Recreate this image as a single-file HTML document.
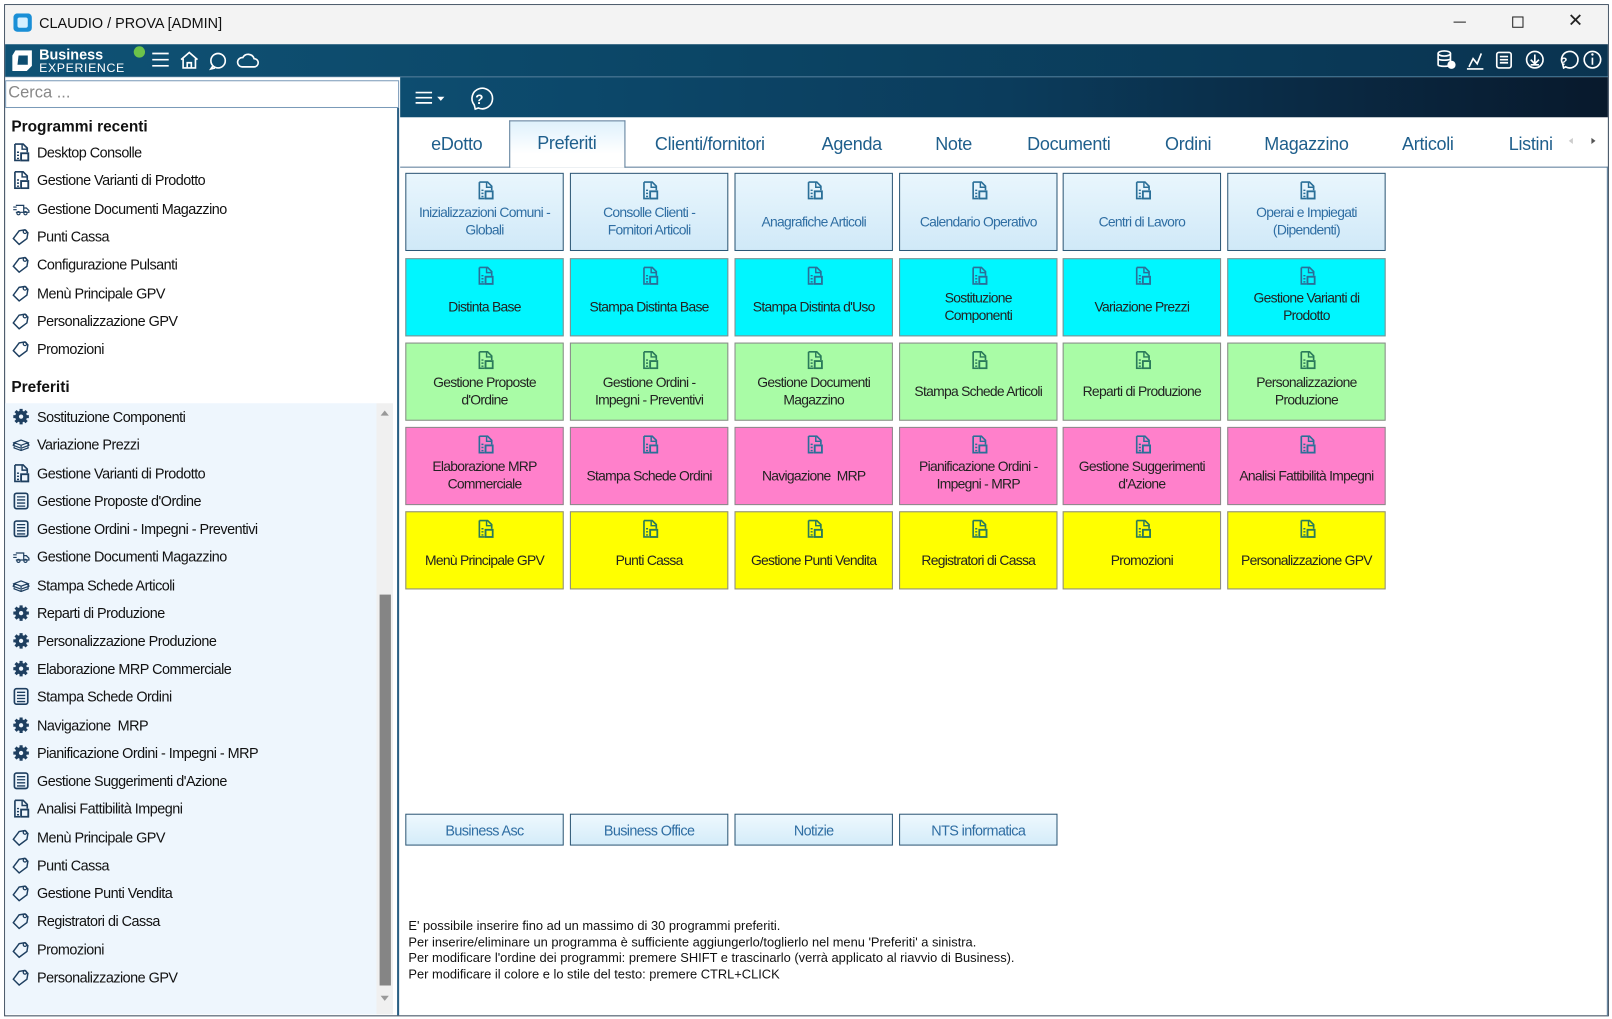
<!DOCTYPE html>
<html><head><meta charset="utf-8"><style>
*{margin:0;padding:0;box-sizing:border-box}
html,body{width:1612px;height:1019px;overflow:hidden;background:#fff;font-family:"Liberation Sans",sans-serif}
.root{position:absolute;left:0;top:0;width:1567px;height:991px;transform:scale(1.0287);transform-origin:0 0;background:#fff}
.abs{position:absolute}
.win{left:4px;top:4px;width:1560px;height:984px;border:1px solid #3a4a5c}
.title{left:5px;top:5px;width:1558px;height:38px;background:#f3f3f3}
.hdr{left:5px;top:43px;width:1558px;height:32px;background:linear-gradient(90deg,#0f5275 0%,#0b4565 45%,#0a3350 100%);border-bottom:1px solid #2a5f80}
.tb{left:389px;top:75px;width:1174px;height:39px;background:linear-gradient(90deg,#0d4d70 0%,#0b3c5c 50%,#0a2a44 75%,#08192c 100%)}
.search{left:5px;top:78px;width:383px;height:27px;border:1px solid #7a9ab8;background:#fff;color:#888;font-size:16px;padding:3px 0 0 2px}
.lp{left:5px;top:105px;width:383px;height:882px;border-right:2px solid #2a5f84}
.h{font-weight:bold;font-size:15px;color:#111;left:11px}
.it{left:12px;font-size:14px;color:#111;letter-spacing:-0.5px;white-space:nowrap;height:20px;line-height:20px}
.it svg{position:absolute;left:0;top:1px;width:17px;height:18px;color:#1e3f60}
.it span{position:absolute;left:24px;top:0}
.pref{left:5px;top:392px;width:361px;height:594px;background:#eef6fd}
.sb{left:366px;top:392px;width:16px;height:594px;background:#f0f0f0}
.tabs{left:389px;top:114px;width:1174px;height:49px;border-bottom:1px solid #5b7c99}
.tab{top:130px;font-size:17.5px;color:#1f5f8c;transform:translateX(-50%);white-space:nowrap;letter-spacing:-0.3px}
.tile{width:154px;height:76px;border:1px solid #8a8a8a;display:flex;align-items:center;justify-content:center;text-align:center;font-size:13.5px;color:#222;letter-spacing:-0.7px;line-height:17px;padding:18px 3px 0}
.tile svg{position:absolute;left:69px;top:7px;width:16px;height:18px;color:#2a6f98}
.b1{background:linear-gradient(#e9f6fd,#d0e9f8);border-color:#2b5675;color:#2f6ea3}
.b2{background:#00f6ff}.b3{background:#a9fca6}.b4{background:#ff80cb}.b5{background:#ffff00}
.b5 svg,.b3 svg{color:#2a7a5a}
.btn{top:791px;width:154px;height:31px;background:linear-gradient(#eef8fe,#d4ecf9);border:1px solid #2b5675;color:#2f6ea3;font-size:14px;letter-spacing:-0.6px;text-align:center;line-height:30px}
.help{left:397px;top:893px;font-size:12.5px;color:#111;line-height:15.7px;letter-spacing:0}
.ic{stroke:#fff;fill:none;stroke-width:1.6}
</style></head><body><div class="root">
<svg width="0" height="0" style="position:absolute">
<defs>
<symbol id="doc" viewBox="0 0 16 18"><path d="M2 1h8l4 4v4M2 1v16h5" fill="none" stroke="currentColor" stroke-width="1.6"/><path d="M9 1v5h5" fill="none" stroke="currentColor" stroke-width="1.4"/><rect x="8" y="10" width="7" height="7" fill="none" stroke="currentColor" stroke-width="1.8"/><path d="M4 9h2M4 12h2M4 15h2" stroke="currentColor" stroke-width="1.4"/></symbol>
<symbol id="tag" viewBox="0 0 18 18"><path d="M13 2l3 3-1 6-8 6-6-6 6-8z" fill="none" stroke="currentColor" stroke-width="1.5"/><circle cx="13" cy="4" r="1.8" fill="none" stroke="currentColor" stroke-width="1.3"/></symbol>
<symbol id="gear" viewBox="0 0 18 18"><circle cx="9" cy="9" r="6" fill="currentColor"/><path d="M9 1v16M1 9h16M3.3 3.3l11.4 11.4M14.7 3.3L3.3 14.7" stroke="currentColor" stroke-width="3.2"/><circle cx="9" cy="9" r="2.2" fill="#eef6fd"/></symbol>
<symbol id="list" viewBox="0 0 16 18"><rect x="1.5" y="1.5" width="13" height="15" rx="2" fill="none" stroke="currentColor" stroke-width="1.6"/><path d="M4 5h8M4 8h8M4 11h8M4 14h8" stroke="currentColor" stroke-width="1.3"/></symbol>
<symbol id="truck" viewBox="0 0 20 18"><path d="M4 5h9v8H4M13 8h3l3 3v2h-6" fill="none" stroke="currentColor" stroke-width="1.4"/><circle cx="7" cy="14" r="1.8" fill="none" stroke="currentColor" stroke-width="1.3"/><circle cx="15" cy="14" r="1.8" fill="none" stroke="currentColor" stroke-width="1.3"/><path d="M1 7h4M1 10h4" stroke="currentColor" stroke-width="1.3"/></symbol>
<symbol id="box" viewBox="0 0 20 18"><path d="M10 4l8 3-8 3-8-3z M2 7v6l8 3 8-3V7M10 10v6M2 7l-1 3 8 3M18 7l1 3-8 3" fill="none" stroke="currentColor" stroke-width="1.4"/></symbol>
</defs></svg>

<div class="abs win"></div>
<div class="abs title"></div>
<svg class="abs" style="left:13px;top:13px" width="18" height="18"><rect x="0" y="0" width="18" height="18" rx="4" fill="#1a8fd6"/><rect x="4" y="4" width="10" height="10" rx="2" fill="#d6f0ff"/></svg>
<div class="abs" style="left:38px;top:14px;font-size:14px;color:#111">CLAUDIO / PROVA [ADMIN]</div>
<div class="abs" style="left:1413px;top:21px;width:12px;height:1px;background:#222"></div>
<div class="abs" style="left:1470px;top:16px;width:11px;height:11px;border:1px solid #222"></div>
<div class="abs" style="left:1524px;top:10px;font-size:18px;color:#222">✕</div>

<div class="abs hdr"></div>
<svg class="abs" style="left:9px;top:47px" width="25" height="24"><path d="M6 2h16v15l-5 5H3V7z" fill="#fff"/><path d="M9 7h9v9H8z" fill="#0e4d70"/></svg>
<div class="abs" style="left:38px;top:45px;font-size:14px;font-weight:bold;color:#fff">Business</div>
<div class="abs" style="left:38px;top:59px;font-size:12px;color:#fff;letter-spacing:0.6px">EXPERIENCE</div>
<div class="abs" style="left:130px;top:45px;width:11px;height:11px;border-radius:50%;background:#6cc24a"></div>
<svg class="abs" style="left:146px;top:49px" width="110" height="20">
<path d="M2 3h16M2 9h16M2 15h16" class="ic"/>
<path d="M30 9l8-7 8 7M32 8v9h12V8M36 17v-5h4v5" class="ic"/>
<circle cx="66" cy="10" r="7" class="ic"/><path d="M61 15l-2 3 4-1" class="ic"/>
<path d="M89 16h12a4 4 0 0 0 0-8 6 6 0 0 0-11-1 4.5 4.5 0 0 0-1 9z" class="ic"/>
</svg>
<svg class="abs" style="left:1396px;top:48px" width="165" height="22">
<ellipse cx="8" cy="4" rx="6" ry="2.5" class="ic"/><path d="M2 4v11c0 2 12 2 12 0V4M2 9c0 2 12 2 12 0" class="ic"/><circle cx="15" cy="15" r="4" fill="#fff"/>
<path d="M32 17l4-8 4 5 4-10M30 19h16" class="ic"/>
<rect x="59" y="3" width="14" height="15" rx="2" class="ic"/><path d="M62 7h8M62 10h8M62 13h8" class="ic"/>
<circle cx="96" cy="10" r="8" class="ic"/><path d="M96 5v8M92 10l4 4 4-4M92 15h8" class="ic"/>
<path d="M124 18l-1-4a8 8 0 1 1 3 3z" class="ic"/><text x="121" y="15" font-size="11" fill="#fff" font-family="Liberation Sans" font-weight="bold">?</text>
<circle cx="152" cy="10" r="8" class="ic"/><path d="M152 8v7" class="ic" stroke-width="2"/><circle cx="152" cy="5" r="1.2" fill="#fff"/>
</svg>

<div class="abs search">Cerca ...</div>
<div class="abs lp"></div>
<div class="abs h" style="top:115px">Programmi recenti</div>
<div class="abs pref"></div>
<div class="abs sb"><div class="abs" style="left:3px;top:186px;width:11px;height:380px;background:#858585"></div>
<div class="abs" style="left:4px;top:7px;width:0;height:0;border-left:4px solid transparent;border-right:4px solid transparent;border-bottom:5px solid #999"></div>
<div class="abs" style="left:4px;top:576px;width:0;height:0;border-left:4px solid transparent;border-right:4px solid transparent;border-top:5px solid #999"></div></div>
<div class="abs h" style="top:368px">Preferiti</div>

<div>
<div class="abs it" style="top:138px"><svg><use href="#doc"/></svg><span>Desktop Consolle</span></div>
<div class="abs it" style="top:165px"><svg><use href="#doc"/></svg><span>Gestione Varianti di Prodotto</span></div>
<div class="abs it" style="top:193px"><svg><use href="#truck"/></svg><span>Gestione Documenti Magazzino</span></div>
<div class="abs it" style="top:220px"><svg><use href="#tag"/></svg><span>Punti Cassa</span></div>
<div class="abs it" style="top:247px"><svg><use href="#tag"/></svg><span>Configurazione Pulsanti</span></div>
<div class="abs it" style="top:275px"><svg><use href="#tag"/></svg><span>Menù Principale GPV</span></div>
<div class="abs it" style="top:302px"><svg><use href="#tag"/></svg><span>Personalizzazione GPV</span></div>
<div class="abs it" style="top:329px"><svg><use href="#tag"/></svg><span>Promozioni</span></div>

<div class="abs it" style="top:395px"><svg><use href="#gear"/></svg><span>Sostituzione Componenti</span></div>
<div class="abs it" style="top:422px"><svg><use href="#box"/></svg><span>Variazione Prezzi</span></div>
<div class="abs it" style="top:450px"><svg><use href="#doc"/></svg><span>Gestione Varianti di Prodotto</span></div>
<div class="abs it" style="top:477px"><svg><use href="#list"/></svg><span>Gestione Proposte d'Ordine</span></div>
<div class="abs it" style="top:504px"><svg><use href="#list"/></svg><span>Gestione Ordini - Impegni - Preventivi</span></div>
<div class="abs it" style="top:531px"><svg><use href="#truck"/></svg><span>Gestione Documenti Magazzino</span></div>
<div class="abs it" style="top:559px"><svg><use href="#box"/></svg><span>Stampa Schede Articoli</span></div>
<div class="abs it" style="top:586px"><svg><use href="#gear"/></svg><span>Reparti di Produzione</span></div>
<div class="abs it" style="top:613px"><svg><use href="#gear"/></svg><span>Personalizzazione Produzione</span></div>
<div class="abs it" style="top:640px"><svg><use href="#gear"/></svg><span>Elaborazione MRP Commerciale</span></div>
<div class="abs it" style="top:667px"><svg><use href="#list"/></svg><span>Stampa Schede Ordini</span></div>
<div class="abs it" style="top:695px"><svg><use href="#gear"/></svg><span>Navigazione &nbsp;MRP</span></div>
<div class="abs it" style="top:722px"><svg><use href="#gear"/></svg><span>Pianificazione Ordini - Impegni - MRP</span></div>
<div class="abs it" style="top:749px"><svg><use href="#list"/></svg><span>Gestione Suggerimenti d'Azione</span></div>
<div class="abs it" style="top:776px"><svg><use href="#doc"/></svg><span>Analisi Fattibilità Impegni</span></div>
<div class="abs it" style="top:804px"><svg><use href="#tag"/></svg><span>Menù Principale GPV</span></div>
<div class="abs it" style="top:831px"><svg><use href="#tag"/></svg><span>Punti Cassa</span></div>
<div class="abs it" style="top:858px"><svg><use href="#tag"/></svg><span>Gestione Punti Vendita</span></div>
<div class="abs it" style="top:885px"><svg><use href="#tag"/></svg><span>Registratori di Cassa</span></div>
<div class="abs it" style="top:913px"><svg><use href="#tag"/></svg><span>Promozioni</span></div>
<div class="abs it" style="top:940px"><svg><use href="#tag"/></svg><span>Personalizzazione GPV</span></div>
</div>

<div class="abs tb"></div>
<svg class="abs" style="left:400px;top:83px" width="90" height="26">
<path d="M4 7h16M4 12h16M4 17h16" class="ic" stroke-width="1.8"/><path d="M25 11h7l-3.5 4z" fill="#fff"/>
<path d="M62 23l-1-4a10 10 0 1 1 4 3z" class="ic" stroke-width="1.8"/><text x="62" y="18" font-size="13" fill="#fff" font-family="Liberation Sans" font-weight="bold">?</text>
</svg>

<div class="abs tabs"></div>
<div class="abs" style="left:495px;top:117px;width:113px;height:46px;border:1px solid #5b7c99;border-bottom:none;background:linear-gradient(#dff1fc,#fff 70%)"></div>
<div class="abs tab" style="left:444px">eDotto</div>
<div class="abs tab" style="left:551px;top:129px">Preferiti</div>
<div class="abs tab" style="left:690px">Clienti/fornitori</div>
<div class="abs tab" style="left:828px">Agenda</div>
<div class="abs tab" style="left:927px">Note</div>
<div class="abs tab" style="left:1039px">Documenti</div>
<div class="abs tab" style="left:1155px">Ordini</div>
<div class="abs tab" style="left:1270px">Magazzino</div>
<div class="abs tab" style="left:1388px">Articoli</div>
<div class="abs tab" style="left:1488px">Listini</div>
<div class="abs" style="left:1525px;top:134px;border-top:3px solid transparent;border-bottom:3px solid transparent;border-right:4px solid #ccc"></div>
<div class="abs" style="left:1547px;top:134px;border-top:3px solid transparent;border-bottom:3px solid transparent;border-left:4px solid #555"></div>
<div class="abs" style="left:1562px;top:162px;width:1px;height:826px;background:#5b7c99"></div>

<div>
<div class="abs tile b1" style="left:394px;top:168px"><svg><use href="#doc"/></svg>Inizializzazioni Comuni -<br>Globali</div>
<div class="abs tile b1" style="left:554px;top:168px"><svg><use href="#doc"/></svg>Consolle Clienti -<br>Fornitori Articoli</div>
<div class="abs tile b1" style="left:714px;top:168px"><svg><use href="#doc"/></svg>Anagrafiche Articoli</div>
<div class="abs tile b1" style="left:874px;top:168px"><svg><use href="#doc"/></svg>Calendario Operativo</div>
<div class="abs tile b1" style="left:1033px;top:168px"><svg><use href="#doc"/></svg>Centri di Lavoro</div>
<div class="abs tile b1" style="left:1193px;top:168px"><svg><use href="#doc"/></svg>Operai e Impiegati (Dipendenti)</div>

<div class="abs tile b2" style="left:394px;top:251px"><svg><use href="#doc"/></svg>Distinta Base</div>
<div class="abs tile b2" style="left:554px;top:251px"><svg><use href="#doc"/></svg>Stampa Distinta Base</div>
<div class="abs tile b2" style="left:714px;top:251px"><svg><use href="#doc"/></svg>Stampa Distinta d'Uso</div>
<div class="abs tile b2" style="left:874px;top:251px"><svg><use href="#doc"/></svg>Sostituzione<br>Componenti</div>
<div class="abs tile b2" style="left:1033px;top:251px"><svg><use href="#doc"/></svg>Variazione Prezzi</div>
<div class="abs tile b2" style="left:1193px;top:251px"><svg><use href="#doc"/></svg>Gestione Varianti di Prodotto</div>

<div class="abs tile b3" style="left:394px;top:333px"><svg><use href="#doc"/></svg>Gestione Proposte d'Ordine</div>
<div class="abs tile b3" style="left:554px;top:333px"><svg><use href="#doc"/></svg>Gestione Ordini -<br>Impegni - Preventivi</div>
<div class="abs tile b3" style="left:714px;top:333px"><svg><use href="#doc"/></svg>Gestione Documenti Magazzino</div>
<div class="abs tile b3" style="left:874px;top:333px"><svg><use href="#doc"/></svg>Stampa Schede Articoli</div>
<div class="abs tile b3" style="left:1033px;top:333px"><svg><use href="#doc"/></svg>Reparti di Produzione</div>
<div class="abs tile b3" style="left:1193px;top:333px"><svg><use href="#doc"/></svg>Personalizzazione Produzione</div>

<div class="abs tile b4" style="left:394px;top:415px"><svg><use href="#doc"/></svg>Elaborazione MRP Commerciale</div>
<div class="abs tile b4" style="left:554px;top:415px"><svg><use href="#doc"/></svg>Stampa Schede Ordini</div>
<div class="abs tile b4" style="left:714px;top:415px"><svg><use href="#doc"/></svg>Navigazione &nbsp;MRP</div>
<div class="abs tile b4" style="left:874px;top:415px"><svg><use href="#doc"/></svg>Pianificazione Ordini - Impegni - MRP</div>
<div class="abs tile b4" style="left:1033px;top:415px"><svg><use href="#doc"/></svg>Gestione Suggerimenti d'Azione</div>
<div class="abs tile b4" style="left:1193px;top:415px"><svg><use href="#doc"/></svg>Analisi Fattibilità Impegni</div>

<div class="abs tile b5" style="left:394px;top:497px"><svg><use href="#doc"/></svg>Menù Principale GPV</div>
<div class="abs tile b5" style="left:554px;top:497px"><svg><use href="#doc"/></svg>Punti Cassa</div>
<div class="abs tile b5" style="left:714px;top:497px"><svg><use href="#doc"/></svg>Gestione Punti Vendita</div>
<div class="abs tile b5" style="left:874px;top:497px"><svg><use href="#doc"/></svg>Registratori di Cassa</div>
<div class="abs tile b5" style="left:1033px;top:497px"><svg><use href="#doc"/></svg>Promozioni</div>
<div class="abs tile b5" style="left:1193px;top:497px"><svg><use href="#doc"/></svg>Personalizzazione GPV</div>
</div>

<div class="abs btn" style="left:394px">Business Asc</div>
<div class="abs btn" style="left:554px">Business Office</div>
<div class="abs btn" style="left:714px">Notizie</div>
<div class="abs btn" style="left:874px">NTS informatica</div>

<div class="abs help">E' possibile inserire fino ad un massimo di 30 programmi preferiti.<br>Per inserire/eliminare un programma è sufficiente aggiungerlo/toglierlo nel menu 'Preferiti' a sinistra.<br>Per modificare l'ordine dei programmi: premere SHIFT e trascinarlo (verrà applicato al riavvio di Business).<br>Per modificare il colore e lo stile del testo: premere CTRL+CLICK</div>
</div></body></html>
